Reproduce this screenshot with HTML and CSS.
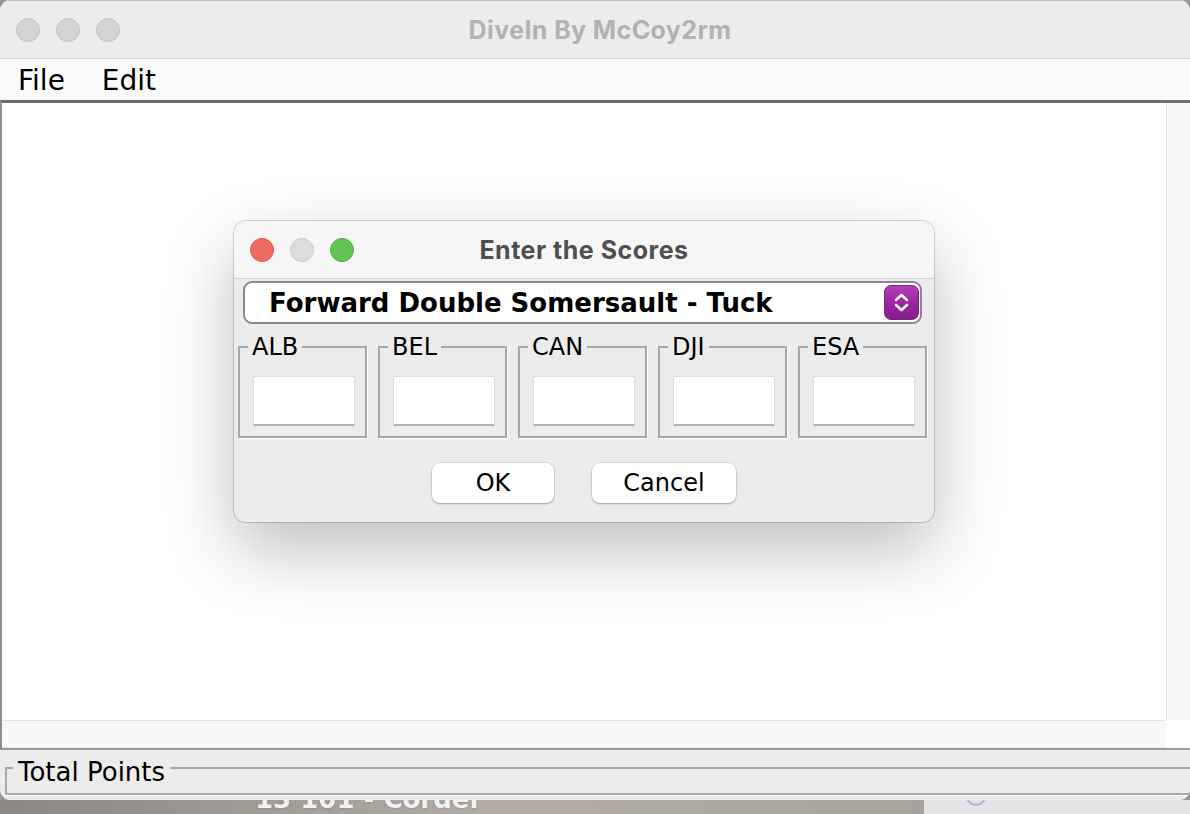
FILE: index.html
```html
<!DOCTYPE html>
<html lang="en">
<head>
<meta charset="utf-8">
<title>DiveIn By McCoy2rm</title>
<link rel="stylesheet" href="styles.css">
</head>
<body>
<div class="screen">
  <div class="window">
    <div class="titlebar">
      <div class="lights">
        <span class="light idle"></span>
        <span class="light idle"></span>
        <span class="light idle"></span>
      </div>
      <div class="win-title">DiveIn By McCoy2rm</div>
      <div></div>
    </div>
    <div class="menubar">
      <span class="menu">File</span>
      <span class="menu">Edit</span>
    </div>
    <div class="scrollpane">
      <div class="pane-main">
        <div class="viewport"></div>
        <div class="vscroll"></div>
      </div>
      <div class="pane-bottom">
        <div class="hscroll"></div>
        <div class="corner"></div>
      </div>
    </div>
    <div class="totals">
      <fieldset class="total-box"><legend>Total Points</legend></fieldset>
    </div>
  </div>
  <div class="desktop">
    <div class="desk-left"><span class="desk-label">13 101 - Corder</span></div>
    <div class="desk-right"><span class="desk-ring"></span></div>
  </div>

  <div class="dialog">
    <div class="dlg-titlebar">
      <div class="lights">
        <span class="light red"></span>
        <span class="light grey"></span>
        <span class="light green"></span>
      </div>
      <div class="dlg-title">Enter the Scores</div>
      <div></div>
    </div>
    <div class="dlg-body">
      <div class="combo">
        <span class="combo-text">Forward Double Somersault - Tuck</span>
        <span class="combo-btn">
          <svg width="33" height="33" viewBox="0 0 33 33" aria-hidden="true">
            <path d="M11 14 L16.5 9 L22 14" fill="none" stroke="#fff" stroke-width="2.6" stroke-linecap="round" stroke-linejoin="round"/>
            <path d="M11 19 L16.5 24 L22 19" fill="none" stroke="#fff" stroke-width="2.6" stroke-linecap="round" stroke-linejoin="round"/>
          </svg>
        </span>
      </div>
      <div class="judges">
        <fieldset class="judge"><legend>ALB</legend><div class="field"></div></fieldset>
        <fieldset class="judge"><legend>BEL</legend><div class="field"></div></fieldset>
        <fieldset class="judge"><legend>CAN</legend><div class="field"></div></fieldset>
        <fieldset class="judge"><legend>DJI</legend><div class="field"></div></fieldset>
        <fieldset class="judge"><legend>ESA</legend><div class="field"></div></fieldset>
      </div>
      <div class="actions">
        <button class="btn btn-ok" type="button">OK</button>
        <button class="btn btn-cancel" type="button">Cancel</button>
      </div>
    </div>
  </div>
</div>
</body>
</html>
```

FILE: styles.css
```css
* { box-sizing: border-box; }
html, body { margin: 0; padding: 0; }
body {
  width: 1190px;
  height: 814px;
  overflow: hidden;
  font-family: "DejaVu Sans", "Noto Sans", sans-serif;
  background: #9a958f;
}
.screen {
  position: relative;
  width: 1190px;
  height: 814px;
  display: flex;
  flex-direction: column;
}

/* main window */
.window {
  height: 800px;
  flex: none;
  display: flex;
  flex-direction: column;
  background: #ececec;
  border-radius: 11px;
  overflow: hidden;
}
.titlebar {
  height: 58px;
  flex: none;
  display: grid;
  grid-template-columns: 1fr auto 1fr;
  align-items: center;
  background: #ececec;
  border-top: 1px solid #c2c2c2;
}
.lights {
  display: flex;
  gap: 16px;
  padding-left: 16px;
}
.light {
  width: 24px;
  height: 24px;
  border-radius: 50%;
  display: block;
}
.light.idle { background: #d4d4d4; border: 1px solid #c5c5c5; }
.light.red { background: #ee6b5f; border: 1px solid #d95a4f; }
.light.grey { background: #dcdcdc; border: 1px solid #cbcbcb; }
.light.green { background: #61c554; border: 1px solid #53ad47; }
.win-title {
  font-family: Inter, "Liberation Sans", sans-serif;
  font-weight: 700;
  font-size: 25px;
  letter-spacing: 0.4px;
  color: #b2b2b2;
  margin-left: 10px;
}
.menubar {
  height: 42px;
  flex: none;
  display: flex;
  align-items: center;
  gap: 37px;
  padding-left: 18px;
  background: #fafafa;
  border-top: 1px solid #d3d3d3;
  font-size: 28px;
  color: #000;
}
.menu { padding-top: 2px; }
.scrollpane {
  height: 650px;
  flex: none;
  display: flex;
  flex-direction: column;
  border-top: 3px solid #6d6d6d;
  border-left: 2px solid #8e8e8e;
  border-bottom: 2px solid #9b9b9b;
}
.pane-main { flex: 1; display: flex; }
.viewport { flex: 1; background: #fff; }
.vscroll { width: 24px; background: #f8f8f8; border-left: 1px solid #e2e2e2; }
.pane-bottom { height: 28px; flex: none; display: flex; }
.hscroll { flex: 1; background: #f9f9f9; border-top: 1px solid #e4e4e4; border-bottom: 1px solid #e6e6e6; }
.corner { width: 24px; background: #fff; }

.totals {
  flex: 1;
  background: #ececec;
  padding: 2px 0 0 5px;
}
.total-box {
  margin: 0;
  padding: 0;
  height: 43px;
  border: 2px solid #a9a9a9;
  border-right: none;
  box-shadow: 0 1px 0 #fff;
}
.total-box legend {
  margin-left: 6px;
  padding: 8px 5px 0 5px;
  font-size: 26px;
  line-height: 24px;
  color: #000;
}

/* desktop strip */
.desktop { flex: 1; display: flex; overflow: hidden; }
.desk-left {
  flex: 1;
  overflow: hidden;
  padding-left: 255px;
  background: linear-gradient(90deg, #8b8682 0%, #a29d97 30%, #b3ada4 55%, #a8a39c 100%);
}
.desk-label {
  display: block;
  margin-top: -14px;
  font-weight: 700;
  font-size: 26px;
  line-height: 26px;
  color: #f2f2f2;
  text-shadow: 0 0 2px rgba(0,0,0,0.3);
}
.desk-right {
  width: 266px;
  background: #e4e4e4;
  overflow: hidden;
  padding-left: 42px;
}
.desk-ring {
  display: block;
  width: 20px;
  height: 20px;
  margin-top: -14px;
  border-radius: 50%;
  border: 2px solid #c9a6d8;
}

/* dialog */
.dialog {
  position: absolute;
  left: 234px;
  top: 221px;
  width: 700px;
  background: #ececec;
  border-radius: 12px;
  overflow: hidden;
  box-shadow: 0 0 0 1px rgba(0,0,0,0.16), 0 28px 70px rgba(0,0,0,0.26);
}
.dlg-titlebar {
  height: 58px;
  display: grid;
  grid-template-columns: 1fr auto 1fr;
  align-items: center;
  background: #f6f6f6;
  border-bottom: 1px solid #d6d6d6;
}
.dlg-title {
  font-family: Inter, "Liberation Sans", sans-serif;
  font-weight: 700;
  font-size: 25px;
  letter-spacing: 0.5px;
  color: #4f4f4f;
}
.dlg-body {
  padding: 2px 0 19px 0;
  display: flex;
  flex-direction: column;
}
.combo {
  height: 43px;
  margin: 0 12px 0 9px;
  display: flex;
  align-items: center;
  background: #fff;
  border: 2px solid #8f8396;
  border-radius: 9px;
  padding-left: 24px;
}
.combo-text {
  font-weight: 700;
  font-size: 26px;
  color: #000;
  white-space: pre;
}
.combo-btn {
  margin-left: auto;
  margin-right: 1px;
  width: 35px;
  height: 35px;
  display: flex;
  align-items: center;
  justify-content: center;
  border-radius: 7px;
  border: 1px solid #6c2a73;
  background: linear-gradient(180deg, #b53cba 0%, #9a25a0 55%, #871c8e 100%);
}
.judges {
  margin-top: 11px;
  padding-left: 4px;
  display: flex;
  gap: 11px;
}
.judge {
  margin: 0;
  width: 129px;
  height: 103px;
  padding: 0 10px 10px 13px;
  border: 2px solid #a7a7a7;
  box-shadow: 1px 1px 0 #fff;
  display: flex;
  flex-direction: column;
  justify-content: flex-end;
}
.judge legend {
  margin-left: -5px;
  padding: 0 4px;
  font-size: 24px;
  line-height: 24px;
  color: #000;
}
.field {
  width: 102px;
  height: 50px;
  background: #fff;
  border: 1px solid #dedede;
  border-bottom: 2px solid #b3b3b3;
}
.actions {
  margin-top: 25px;
  display: flex;
  justify-content: center;
  gap: 38px;
}
.btn {
  height: 40px;
  border: none;
  border-radius: 8px;
  background: #fff;
  font-family: "DejaVu Sans", "Noto Sans", sans-serif;
  font-size: 24px;
  color: #000;
  padding: 0;
  box-shadow: 0 0 0 1px rgba(0,0,0,0.07), 0 1px 2px rgba(0,0,0,0.28);
}
.btn-ok { width: 122px; }
.btn-cancel { width: 144px; }
```
